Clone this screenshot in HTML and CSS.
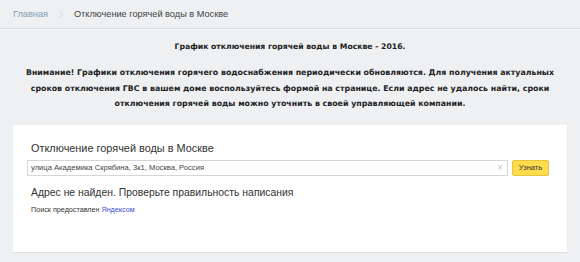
FILE: index.html
```html
<!DOCTYPE html>
<html lang="ru">
<head>
<meta charset="utf-8">
<link rel="stylesheet" href="styles.css">
</head>
<body>
<nav class="crumbs">
  <a class="crumb-link" href="#">Главная</a>
  <span class="crumb-sep"><svg width="6" height="9" viewBox="0 0 6 9"><path d="M1 1l3.5 3.5L1 8" fill="none" stroke="#dde1e5" stroke-width="1.4"/></svg></span>
  <span class="crumb-cur">Отключение горячей воды в Москве</span>
</nav>
<main class="content">
  <h1 class="title">График отключения горячей воды в Москве - 2016.</h1>
  <p class="notice">Внимание! Графики отключения горячего водоснабжения периодически обновляются. Для получения актуальных сроков отключения ГВС в вашем доме воспользуйтесь формой на странице. Если адрес не удалось найти, сроки отключения горячей воды можно уточнить в своей управляющей компании.</p>
  <section class="card">
    <h2 class="card-title">Отключение горячей воды в Москве</h2>
    <div class="search">
      <div class="field">
        <span class="field-text">улица Академика Скрябина, 3к1, Москва, Россия</span>
        <span class="field-clear">×</span>
      </div>
      <button class="btn">Узнать</button>
    </div>
    <div class="result">Адрес не найден. Проверьте правильность написания</div>
    <div class="credit">Поиск предоставлен <a href="#" class="credit-link">Яндексом</a></div>
  </section>
</main>
</body>
</html>
```
FILE: styles.css
```css
html, body {
  margin: 0;
  padding: 0;
  background: #eef0f2;
}
body {
  font-family: "Liberation Sans", Arial, sans-serif;
  color: #333;
}
.crumbs {
  display: flex;
  align-items: center;
  height: 28px;
  padding: 0 13px;
  border-bottom: 1px solid #d9dee2;
  font-size: 9.2px;
  box-shadow: 0 1px 0 #f6f7f8;
}
.crumb-link {
  color: #7f9db5;
  text-decoration: none;
}
.crumb-sep {
  display: flex;
  margin: 0 10px 0 10px;
}
.crumb-cur {
  color: #444;
}
.content {
  padding: 0 13px 10px;
}
.title {
  margin: 11px 0 0;
  font-family: "DejaVu Sans", Verdana, sans-serif;
  font-size: 7.7px;
  font-weight: bold;
  text-align: center;
  color: #222;
  line-height: 14px;
}
.notice {
  max-width: 538px;
  margin: 11px auto 0;
  font-family: "DejaVu Sans", Verdana, sans-serif;
  font-size: 7.85px;
  font-weight: bold;
  text-align: center;
  color: #222;
  line-height: 15.5px;
}
.card {
  margin-top: 13px;
  background: #fff;
  height: 127px;
  box-sizing: border-box;
  padding: 16px 18px 0 14px;
  box-shadow: 0 1px 1px #dde1e4;
}
.card-title {
  margin: 0 0 4px 4px;
  font-size: 10.9px;
  font-weight: normal;
  color: #333;
  line-height: 15px;
}
.search {
  display: flex;
  gap: 4px;
}
.field {
  flex: 1;
  display: flex;
  align-items: center;
  height: 16px;
  box-sizing: border-box;
  border: 1px solid #d6d6d6;
  padding: 0 4px 0 3px;
}
.field-text {
  flex: 1;
  font-size: 7.6px;
  line-height: 10px;
  color: #444;
}
.field-clear {
  color: #c8c8c8;
  font-size: 10px;
  line-height: 10px;
}
.btn {
  width: 37px;
  height: 16px;
  padding: 0;
  border: 1px solid #e8c43e;
  border-radius: 2px;
  background: #ffdb4d;
  font-family: "Liberation Sans", Arial, sans-serif;
  font-size: 7.5px;
  color: #333;
}
.result {
  margin: 9px 0 0 4px;
  font-size: 10.4px;
  line-height: 15px;
  color: #333;
}
.credit {
  margin: 5px 0 0 4px;
  font-size: 7.2px;
  color: #333;
}
.credit-link {
  color: #3b4fd0;
  text-decoration: none;
}
```
